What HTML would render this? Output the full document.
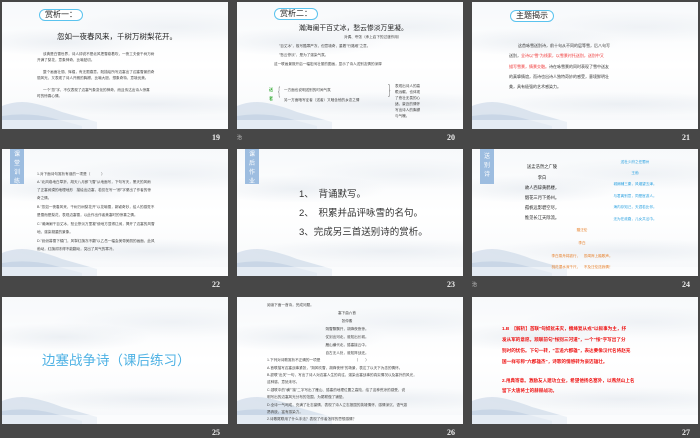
<!DOCTYPE html>
<html><head><meta charset="utf-8">
<style>
*{margin:0;padding:0;box-sizing:border-box}
body{width:700px;height:438px;background:#474747;position:relative;overflow:hidden;font-family:"Liberation Sans","Noto Sans CJK SC",sans-serif}
.s{position:absolute;width:226px;height:127px;overflow:hidden;
background:
radial-gradient(ellipse 90px 14px at 60px 40px,rgba(200,210,222,.3),transparent),
radial-gradient(ellipse 120px 16px at 170px 25px,rgba(205,214,225,.25),transparent),
radial-gradient(ellipse 140px 12px at 150px 102px,rgba(210,218,228,.35),transparent),
linear-gradient(#f7f9fb,#fff 50%,#f6f8fa);}
.s svg.m{position:absolute;left:0;bottom:0}
.n{position:absolute;color:#eee;font:bold 8px "Liberation Serif",serif}
.t{position:absolute;white-space:nowrap;color:#222}
.badge{position:absolute;border:1.3px solid #5bc3ee;border-radius:7px;background:#fff;font-size:8px;line-height:10px;padding:0 5px;color:#222}
.tab{position:absolute;left:8px;top:0;width:14px;background:#9dbde0;color:#fff;font-size:6px;line-height:9px;text-align:center;padding-top:2px}
.sm{font-size:3.6px;color:#444}
.c{transform:translateX(-50%)}
</style></head><body>

<div class="s" style="left:2px;top:2px">
<svg class="m" width="226" height="127" viewBox="0 0 226 127"><path d="M0 104 Q15 98 30 101 Q45 104 60 110 L95 120 L95 127 L0 127Z" fill="#c8d6e6" opacity=".6"/><path d="M0 114 Q25 110 50 116 L80 124 L80 127 L0 127Z" fill="#b3c6dc" opacity=".45"/><rect x="0" y="118" width="226" height="9" fill="#fff" opacity=".5"/></svg>
<div class="badge" style="left:37px;top:7px">赏析一：</div>
<div class="t" style="left:55px;top:29px;font-size:7.5px">忽如一夜春风来，千树万树梨花开。</div>
<div class="t sm" style="left:41px;top:50px">该典是白雪世界，诗人却说不是北风把雪卷着吹，一夜工夫使千树万树</div>
<div class="t sm" style="left:35px;top:56px">开满了梨花，意象神奇，比喻贴切。</div>
<div class="t sm" style="left:41px;top:68px">整个画面壮丽、辉煌，有无限春意。既描绘所写边塞出了边塞雪景的奇</div>
<div class="t sm" style="left:35px;top:74px">丽风光，又表现了诗人开朗的胸襟，比喻大胆，想象奇特，意境优美。</div>
<div class="t sm" style="left:41px;top:86px">一个"忽"字，不仅表现了边塞气象变化的神奇，而且传达出诗人惊喜</div>
<div class="t sm" style="left:35px;top:92px">时的惊喜心情。</div>
</div>
<div class="n" style="left:212px;top:133px">19</div>

<div class="s" style="left:237px;top:2px">
<svg class="m" width="226" height="127" viewBox="0 0 226 127"><path d="M0 104 Q15 98 30 101 Q45 104 60 110 L95 120 L95 127 L0 127Z" fill="#c8d6e6" opacity=".6"/><path d="M0 114 Q25 110 50 116 L80 124 L80 127 L0 127Z" fill="#b3c6dc" opacity=".45"/><rect x="0" y="118" width="226" height="9" fill="#fff" opacity=".5"/></svg>
<div class="badge" style="left:37px;top:6px">赏析二：</div>
<div class="t" style="left:62px;top:20px;font-size:6.8px">瀚海阑干百丈冰，愁云惨淡万里凝。</div>
<div class="t sm" style="left:107px;top:33px">对偶、夸张（承上启下的过渡作用）</div>
<div class="t sm" style="left:42px;top:42px">"百丈冰"，极写酷寒严冻，但意境奇，重着"行路难"之意。</div>
<div class="t sm" style="left:42px;top:51px">"愁云惨淡"，是为了渲染气氛。</div>
<div class="t sm" style="left:37px;top:60px">这一联画景既开启一幅宏阔壮丽的图画，显示了诗人送别友情的深厚</div>
<div class="t" style="left:32px;top:85px;font-size:4px;color:#3a3;font-weight:bold">送</div>
<div class="t" style="left:32px;top:94px;font-size:4px;color:#3a3;font-weight:bold">者</div>
<div class="t" style="left:40px;top:82px;font-size:12px;color:#666;transform:scaleX(.4)">{</div>
<div class="t sm" style="left:47px;top:86px">一方面也说明送别的时间气氛</div>
<div class="t sm" style="left:47px;top:96px">另一方面暗写征者（送者）又暗含他的乡念之情</div>
<div class="t" style="left:150px;top:79px;font-size:14px;color:#666;transform:scaleX(.4)">}</div>
<div class="t sm" style="left:158px;top:81px;white-space:normal;width:28px;line-height:6px">表现出诗人的高瞻远瞩，也体现了悲壮无畏的心绪，豪迈的情怀写出诗人的胸襟与气魄。</div>
</div>
<div class="n" style="left:447px;top:133px">20</div>
<div class="t" style="left:237px;top:134px;font-size:5px;color:#ccc">治</div>

<div class="s" style="left:472px;top:2px">
<svg class="m" width="226" height="127" viewBox="0 0 226 127"><path d="M0 104 Q15 98 30 101 Q45 104 60 110 L95 120 L95 127 L0 127Z" fill="#c8d6e6" opacity=".6"/><path d="M0 114 Q25 110 50 116 L80 124 L80 127 L0 127Z" fill="#b3c6dc" opacity=".45"/><rect x="0" y="118" width="226" height="9" fill="#fff" opacity=".5"/></svg>
<div class="badge" style="left:38px;top:8px">主题揭示</div>
<div class="t" style="left:46px;top:41px;font-size:4px;color:#333">这首咏雪送别诗，前十句从不同的层等雪，后八句写</div>
<div class="t" style="left:37px;top:51px;font-size:4px;color:#333">送别，<span style="color:#e33">全诗以"雪"为线索，以雪景衬托送别，送别中又</span></div>
<div class="t" style="left:37px;top:62px;font-size:4px;color:#333"><span style="color:#e33">描写雪景，情景交融。</span>诗在咏雪景的同时表现了雪中送友</div>
<div class="t" style="left:37px;top:72px;font-size:4px;color:#333">的真挚情谊，而诗也出诗人独特奇妙的感受，意境鲜明壮</div>
<div class="t" style="left:37px;top:82px;font-size:4px;color:#333">美，具有极强的艺术感染力。</div>
</div>
<div class="n" style="left:682px;top:133px">21</div>

<div class="s" style="left:2px;top:149px">
<svg class="m" width="226" height="127" viewBox="0 0 226 127"><path d="M0 104 Q15 98 30 101 Q45 104 60 110 L95 120 L95 127 L0 127Z" fill="#c8d6e6" opacity=".6"/><path d="M0 114 Q25 110 50 116 L80 124 L80 127 L0 127Z" fill="#b3c6dc" opacity=".45"/><rect x="0" y="118" width="226" height="9" fill="#fff" opacity=".5"/></svg>
<div class="tab" style="height:35px">课<br>堂<br>训<br>练</div>
<div class="t sm" style="left:35px;top:23px">1.对下面诗句赏析有误的一项是（　　　）</div>
<div class="t sm" style="left:35px;top:31px">A."北风卷地白草折，胡天八月即飞雪"从地面写，下句写天，黑天的风雨</div>
<div class="t sm" style="left:35px;top:39px">了正塞阔漠的地理地形　描绘出边塞，若仅在写一"即"字便出了作者的惊</div>
<div class="t sm" style="left:35px;top:47px">奇之情。</div>
<div class="t sm" style="left:35px;top:56px">B."忽如一夜春风来，千树万树梨花开"以花喻雪，新颖奇妙，给人的感觉不</div>
<div class="t sm" style="left:35px;top:64px">是雪而是梨花，表现边塞雪，以此作出作者美塞时的惊喜之情。</div>
<div class="t sm" style="left:35px;top:73px">C."瀚海阑干百丈冰，愁云惨淡万里凝"使地方显得辽阔，揭开了边塞的风雪</div>
<div class="t sm" style="left:35px;top:81px">地，渲染凝重的景象。</div>
<div class="t sm" style="left:35px;top:90px">D."纷纷暮雪下辕门，风掣红旗冻不翻"以乙岳一幅会美带美丽的画面，此风</div>
<div class="t sm" style="left:35px;top:98px">勃动，红旗却冻得不能翻动，突出了风气的寒冷。</div>
</div>
<div class="n" style="left:212px;top:280px">22</div>

<div class="s" style="left:237px;top:149px">
<svg class="m" width="226" height="127" viewBox="0 0 226 127"><path d="M0 104 Q15 98 30 101 Q45 104 60 110 L95 120 L95 127 L0 127Z" fill="#c8d6e6" opacity=".6"/><path d="M0 114 Q25 110 50 116 L80 124 L80 127 L0 127Z" fill="#b3c6dc" opacity=".45"/><rect x="0" y="118" width="226" height="9" fill="#fff" opacity=".5"/></svg>
<div class="tab" style="height:35px">课<br>后<br>作<br>业</div>
<div class="t" style="left:62px;top:37px;font-size:9.5px;color:#333">1、　背诵默写。</div>
<div class="t" style="left:62px;top:56px;font-size:9.5px;color:#333">2、　积累并品评咏雪的名句。</div>
<div class="t" style="left:62px;top:75px;font-size:9.5px;color:#333">3、完成另三首送别诗的赏析。</div>
</div>
<div class="n" style="left:447px;top:280px">23</div>

<div class="s" style="left:472px;top:149px">
<svg class="m" width="226" height="127" viewBox="0 0 226 127"><path d="M0 104 Q15 98 30 101 Q45 104 60 110 L95 120 L95 127 L0 127Z" fill="#c8d6e6" opacity=".6"/><path d="M0 114 Q25 110 50 116 L80 124 L80 127 L0 127Z" fill="#b3c6dc" opacity=".45"/><rect x="0" y="118" width="226" height="9" fill="#fff" opacity=".5"/></svg>
<div class="tab" style="height:35px;padding-top:4px">送<br>别<br>诗</div>
<div class="t c" style="left:70px;top:15px;font-size:4.3px">送孟浩然之广陵</div>
<div class="t c" style="left:70px;top:26px;font-size:4.3px">李白</div>
<div class="t c" style="left:70px;top:36px;font-size:4.3px">故人西辞黄鹤楼，</div>
<div class="t c" style="left:70px;top:46px;font-size:4.3px">烟花三月下扬州。</div>
<div class="t c" style="left:70px;top:56px;font-size:4.3px">孤帆远影碧空尽，</div>
<div class="t c" style="left:70px;top:66px;font-size:4.3px">惟见长江天际流。</div>
<div class="t c" style="left:163px;top:11px;font-size:3.6px;color:#29a0e0">送杜少府之任蜀州</div>
<div class="t c" style="left:163px;top:22px;font-size:3.6px;color:#29a0e0">王勃</div>
<div class="t c" style="left:163px;top:33px;font-size:3.6px;color:#29a0e0">城阙辅三秦，风烟望五津。</div>
<div class="t c" style="left:163px;top:45px;font-size:3.6px;color:#29a0e0">与君离别意，同是宦游人。</div>
<div class="t c" style="left:163px;top:56px;font-size:3.6px;color:#29a0e0">海内存知己，天涯若比邻。</div>
<div class="t c" style="left:163px;top:68px;font-size:3.6px;color:#29a0e0">无为在歧路，儿女共沾巾。</div>
<div class="t c" style="left:110px;top:79px;font-size:3.6px;color:#e8802a">赠汪伦</div>
<div class="t c" style="left:110px;top:92px;font-size:3.6px;color:#e8802a">李白</div>
<div class="t c" style="left:110px;top:105px;font-size:3.6px;color:#e8802a">李白乘舟将欲行，　忽闻岸上踏歌声。</div>
<div class="t c" style="left:110px;top:116px;font-size:3.6px;color:#e8802a">桃花潭水深千尺，　不及汪伦送我情！</div>
</div>
<div class="n" style="left:682px;top:280px">24</div>
<div class="t" style="left:472px;top:281px;font-size:5px;color:#ccc">治</div>

<div class="s" style="left:2px;top:297px">
<svg class="m" width="226" height="127" viewBox="0 0 226 127"><path d="M0 104 Q15 98 30 101 Q45 104 60 110 L95 120 L95 127 L0 127Z" fill="#c8d6e6" opacity=".6"/><path d="M0 114 Q25 110 50 116 L80 124 L80 127 L0 127Z" fill="#b3c6dc" opacity=".45"/><rect x="0" y="118" width="226" height="9" fill="#fff" opacity=".5"/></svg>
<div class="t" style="left:40px;top:52px;font-size:13.5px;color:#4fb2e4">边塞战争诗（课后练习）</div>
</div>
<div class="n" style="left:212px;top:428px">25</div>

<div class="s" style="left:237px;top:297px">
<svg class="m" width="226" height="127" viewBox="0 0 226 127"><path d="M0 104 Q15 98 30 101 Q45 104 60 110 L95 120 L95 127 L0 127Z" fill="#c8d6e6" opacity=".6"/><path d="M0 114 Q25 110 50 116 L80 124 L80 127 L0 127Z" fill="#b3c6dc" opacity=".45"/><rect x="0" y="118" width="226" height="9" fill="#fff" opacity=".5"/></svg>
<div class="t sm" style="left:30px;top:6px">阅读下面一首诗，完成问题。</div>
<div class="t sm c" style="left:110px;top:14px">塞下曲六首</div>
<div class="t sm c" style="left:110px;top:22px">张仲素</div>
<div class="t sm c" style="left:110px;top:30px">朔雪飘飘开，胡烽夜夜惊。</div>
<div class="t sm c" style="left:110px;top:38px">仗剑出河北，谁知出长城。</div>
<div class="t sm c" style="left:110px;top:46px">雁山横代北，狐塞接云中。</div>
<div class="t sm c" style="left:110px;top:54px">自古无人处，谁知阵战还。</div>
<div class="t sm" style="left:30px;top:61px">1.下列对诗歌赏析不正确的一项是　　　　　　　　　　（　　）</div>
<div class="t sm" style="left:30px;top:69px">A.首联描写边塞战事紧张，"朔风吹雪，胡烽夜惊"的场景，表达了以天下为念的情怀。</div>
<div class="t sm" style="left:30px;top:76px">B.颔联"出关"一句，写出了诗人对边塞人生的向往，渲染出塞战事的真实情况以及塞外的风光，</div>
<div class="t sm" style="left:30px;top:83px">这种感，意犹未尽。</div>
<div class="t sm" style="left:30px;top:91px">C.颈联中的"横""接"二字写出了雁山、狐塞的地理位置之高险，给了这种荒凉的感受，说</div>
<div class="t sm" style="left:30px;top:98px">明写出的边塞风光分布的范围，为尾联做了铺垫。</div>
<div class="t sm" style="left:30px;top:106px">D.全诗一气呵成，充满了壮志豪情，表现了诗人立志报国的英雄情怀，感情深沉，语气激</div>
<div class="t sm" style="left:30px;top:113px">昂奔放，富有感染力。</div>
<div class="t sm" style="left:30px;top:120px">2.诗歌尾联用了什么手法？表现了作者怎样的思想感情？</div>
</div>
<div class="n" style="left:447px;top:428px">26</div>

<div class="s" style="left:472px;top:297px">
<svg class="m" width="226" height="127" viewBox="0 0 226 127"><path d="M0 104 Q15 98 30 101 Q45 104 60 110 L95 120 L95 127 L0 127Z" fill="#c8d6e6" opacity=".6"/><path d="M0 114 Q25 110 50 116 L80 124 L80 127 L0 127Z" fill="#b3c6dc" opacity=".45"/><rect x="0" y="118" width="226" height="9" fill="#fff" opacity=".5"/></svg>
<div class="t" style="left:30px;top:29px;font-size:4.6px;color:#e11;font-weight:bold">1.B　【解析】首联"匈奴犹未灭，魏绛复从戎"以叙事为主，抒</div>
<div class="t" style="left:30px;top:40px;font-size:4.6px;color:#e11;font-weight:bold">发从军的意愿。颔联前句"怅别三河道"，一个"怅"字写出了分</div>
<div class="t" style="left:30px;top:51px;font-size:4.6px;color:#e11;font-weight:bold">别时的忧伤。下句一转，"言追六郡雄"，表达要像汉代名将赵充</div>
<div class="t" style="left:30px;top:62px;font-size:4.6px;color:#e11;font-weight:bold">国一样号称"六郡雄杰"，诗歌的情感转为豪迈雄壮。</div>
<div class="t" style="left:30px;top:81px;font-size:4.6px;color:#e11;font-weight:bold">2.用典寄意。激励友人建功立业，希望他扬名塞外，以燕然山上名</div>
<div class="t" style="left:30px;top:91px;font-size:4.6px;color:#e11;font-weight:bold">留下大唐将士的赫赫战功。</div>
</div>
<div class="n" style="left:682px;top:428px">27</div>

</body></html>
